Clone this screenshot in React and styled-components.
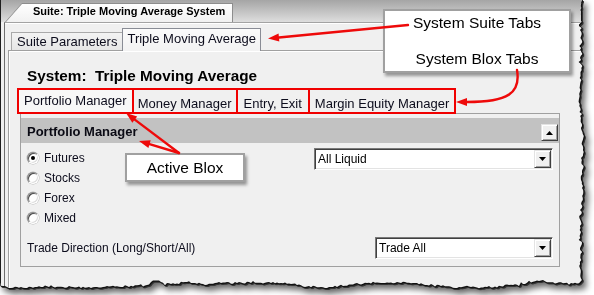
import React from "react";
import styled, { createGlobalStyle } from "styled-components";

const GlobalStyle = createGlobalStyle`
  html, body { margin: 0; padding: 0; background: #ffffff; }
  body { font-family: "Liberation Sans", Arial, sans-serif; color: #000; }
  * { box-sizing: border-box; }
`;

/* ---------- torn edge outline (computed once) ---------- */
function rng(seed) {
  let s = seed;
  return () => {
    s = (s * 16807) % 2147483647;
    return s / 2147483647;
  };
}
const rand = rng(11);
const tornPts = ["0px 0px"];
let walk = 0;
for (let y = 0; y <= 281; y += 2) {
  walk = Math.max(-2.5, Math.min(2.5, walk + (rand() - 0.5) * 1.6));
  const base = y < 24 ? 583 : 581;
  const spike = rand() > 0.8 ? (rand() - 0.5) * 4 : 0;
  const x = base + walk + spike + (rand() - 0.5) * 1.6;
  tornPts.push(`${x.toFixed(1)}px ${y}px`);
}
walk = 0;
for (let x = 579; x >= 0; x -= 2) {
  walk = Math.max(-2.5, Math.min(2.5, walk + (rand() - 0.5) * 1.6));
  const bump = -6 * Math.exp(-(((x - 157) / 7) ** 2));
  const spike = rand() > 0.8 ? (rand() - 0.5) * 3.5 : 0;
  const y = 285 + walk + spike + bump + (rand() - 0.5) * 1.6 - (x > 520 ? 2 : 0);
  tornPts.push(`${x}px ${y.toFixed(1)}px`);
}
tornPts.push("0px 283px");
const TORN = `polygon(${tornPts.join(",")})`;

/* ---------- layout ---------- */
const Stage = styled.div`
  position: relative;
  width: 594px;
  height: 295px;
  overflow: hidden;
  background: #ffffff;
`;

const TornFrame = styled.div`
  width: 594px;
  height: 295px;
  filter: drop-shadow(1px 0 0 #111) drop-shadow(0 1px 0 #111) drop-shadow(1px 1px 0 #333)
    drop-shadow(3px 4px 3px rgba(0, 0, 0, 0.6));
`;

const Window = styled.div`
  width: 590px;
  height: 295px;
  background: #f0f0f0;
  border-left: 1px solid #1e1e1e;
  clip-path: ${TORN};
  display: flex;
  flex-direction: column;
`;

const TitleStrip = styled.div`
  height: 22px;
  flex: none;
  display: flex;
  align-items: flex-end;
  padding-left: 4px;
  background: linear-gradient(#a5a5a5, #dedede);
`;

const SuiteTabShape = styled.div`
  width: 228px;
  height: 19px;
  padding: 1px 1px 0 1px;
  background: #8d8d8d;
  clip-path: polygon(17px 0, 100% 0, 100% 100%, 0 100%);
`;

const SuiteTabFace = styled.div`
  height: 100%;
  background: linear-gradient(#ffffff, #f1f1f1);
  clip-path: polygon(16px 0, 100% 0, 100% 100%, 0 100%);
  padding-left: 27px;
  font-weight: bold;
  font-size: 11px;
  line-height: 15px;
  color: #000;
  white-space: nowrap;
`;

const Frame = styled.div`
  flex: 1;
  margin-left: 3px;
  border-left: 1px solid #6f6f6f;
  border-top: 1px solid #a3a3a3;
  box-shadow: inset 0 1px #ffffff;
  padding: 5px 0 0 3px;
  display: flex;
  flex-direction: column;
`;

const SuiteTabs = styled.div`
  display: flex;
  align-items: flex-end;
  height: 23px;
  margin: 0 0 -1px 3px;
  position: relative;
  z-index: 1;
`;

const SuiteTab = styled.div`
  font-size: 13px;
  line-height: 16px;
  white-space: nowrap;
  color: #0c0c1c;
  border: 1px solid ${(p) => (p.$active ? "#898c95" : "#a9a9a9")};
  border-bottom: none;
  height: ${(p) => (p.$active ? "23px" : "18px")};
  padding: ${(p) => (p.$active ? "2px 4px 0" : "1px 5px 0")};
  margin-bottom: ${(p) => (p.$active ? "0" : "1px")};
  margin-right: ${(p) => (p.$active ? "0" : "-1px")};
  background: ${(p) =>
    p.$active ? "linear-gradient(#fbfbfb, #f2f2f2)" : "linear-gradient(#f3f3f3, #e6e6e6)"};
`;

const SuitePanel = styled.div`
  flex: 1;
  border-top: 1px solid #a0a0a0;
  border-left: 1px solid #a0a0a0;
  box-shadow: inset 1px 1px #ffffff;
  padding-left: 8px;
  display: flex;
  flex-direction: column;
`;

const SystemTitle = styled.div`
  margin: 16px 0 3px 10px;
  font-weight: bold;
  font-size: 15.3px;
  line-height: 18px;
  color: #000;
  white-space: nowrap;
`;

const BloxTabs = styled.div`
  display: flex;
  height: 26px;
  position: relative;
  z-index: 1;
`;

const BloxTab = styled.div`
  height: 26px;
  border: 2px solid #f00000;
  margin-left: ${(p) => (p.$first ? "0" : "-2px")};
  padding: ${(p) => (p.$active ? "3px" : "6px")} ${(p) => p.$pad || "5px"} 0;
  font-size: 13px;
  line-height: 15px;
  white-space: nowrap;
  color: #0c0c1c;
  background: ${(p) => (p.$active ? "#f7f7f7" : "#f0f0f0")};
`;

const BloxPanel = styled.div`
  width: 540px;
  margin: -1px 0 0 3px;
  border: 1px solid #a0a0a0;
  padding-top: 4px;
  display: flex;
  flex-direction: column;
`;

const BloxHeader = styled.div`
  height: 25px;
  background: #c2c2c2;
  display: flex;
  justify-content: space-between;
  padding-left: 6px;
`;

const HeaderTitle = styled.div`
  font-weight: bold;
  font-size: 13px;
  line-height: 23px;
  padding-top: 2px;
  color: #0a0a14;
`;

const ScrollButton = styled.div`
  align-self: flex-end;
  width: 17px;
  height: 17px;
  margin: 0 1px 2px 0;
  background: #f0f0f0;
  border: 1px solid;
  border-color: #e3e3e3 #404040 #404040 #e3e3e3;
  box-shadow: inset 1px 1px #ffffff, inset -1px -1px #a0a0a0;
  display: flex;
  align-items: center;
  justify-content: center;
`;

const BloxBody = styled.div`
  padding: 5px 6px 7px 6px;
  display: flex;
  flex-direction: column;
`;

const TopRow = styled.div`
  display: flex;
  justify-content: space-between;
  align-items: flex-start;
`;

const RadioGroup = styled.div`
  display: flex;
  flex-direction: column;
`;

const RadioRow = styled.label`
  height: 20px;
  display: flex;
  align-items: center;
  gap: 5px;
`;

const RadioCircle = styled.span`
  width: 12px;
  height: 12px;
  border-radius: 50%;
  background: #ffffff;
  border: 1px solid;
  border-color: #8a8a8a #ffffff #ffffff #8a8a8a;
  box-shadow: inset 1px 1px #4a4a4a, inset -1px -1px #dcdcdc, 0 0 0 0.5px #b8b8b8;
  display: flex;
  align-items: center;
  justify-content: center;
  &::after {
    content: "";
    width: 4px;
    height: 4px;
    border-radius: 50%;
    background: ${(p) => (p.$checked ? "#000" : "transparent")};
  }
`;

const RadioLabel = styled.span`
  font-size: 12px;
  line-height: 20px;
  color: #0c0c1c;
`;

const FieldRow = styled.div`
  margin-top: 9px;
  display: flex;
  justify-content: space-between;
  align-items: center;
`;

const FieldLabel = styled.span`
  font-size: 12px;
  color: #0c0c1c;
  white-space: nowrap;
`;

const Select = styled.div`
  width: ${(p) => p.$width}px;
  height: 22px;
  background: #ffffff;
  border: 1px solid;
  border-color: #7a7a7a #ffffff #ffffff #7a7a7a;
  box-shadow: inset 1px 1px #404040, inset -1px -1px #e3e3e3;
  padding: 1px;
  display: flex;
`;

const SelectValue = styled.span`
  flex: 1;
  padding-left: 2px;
  font-size: 12px;
  line-height: 18px;
  color: #000;
`;

const DropButton = styled.span`
  width: 17px;
  height: 18px;
  background: #f0f0f0;
  border: 1px solid;
  border-color: #e3e3e3 #404040 #404040 #e3e3e3;
  box-shadow: inset 1px 1px #ffffff, inset -1px -1px #a0a0a0;
  display: flex;
  align-items: center;
  justify-content: center;
`;

/* ---------- annotations ---------- */
const Callout = styled.div`
  position: absolute;
  left: ${(p) => p.$x}px;
  top: ${(p) => p.$y}px;
  width: ${(p) => p.$w}px;
  height: ${(p) => p.$h}px;
  background: #ffffff;
  border: 2px solid #a0a0a0;
  box-shadow: 2px 3px 3px rgba(0, 0, 0, 0.38);
  display: flex;
  flex-direction: column;
  align-items: center;
  font-size: 15.5px;
  color: #000;
`;

const SuiteCalloutBody = styled.div`
  padding-top: 3px;
  display: flex;
  flex-direction: column;
  align-items: center;
  gap: 18px;
  line-height: 18px;
  white-space: nowrap;
`;

const ActiveCalloutText = styled.div`
  line-height: 25px;
  white-space: nowrap;
`;

const Overlay = styled.svg`
  position: absolute;
  left: 0;
  top: 0;
  pointer-events: none;
`;

const head = (tx, ty, fx, fy, len = 11, hw = 4) => {
  const dx = tx - fx;
  const dy = ty - fy;
  const d = Math.hypot(dx, dy);
  const ux = dx / d;
  const uy = dy / d;
  const bx = tx - ux * len;
  const by = ty - uy * len;
  const px = -uy * hw;
  const py = ux * hw;
  return {
    bx,
    by,
    pts: `${tx},${ty} ${bx + px},${by + py} ${bx - px},${by - py}`,
  };
};

const RED = "#ee0a0a";

function StraightArrow({ fx, fy, tx, ty }) {
  const h = head(tx, ty, fx, fy);
  return (
    <g>
      <line x1={fx} y1={fy} x2={h.bx} y2={h.by} stroke={RED} strokeWidth="2.4" strokeLinecap="round" />
      <polygon points={h.pts} fill={RED} />
    </g>
  );
}

function Arrows() {
  const curveHead = head(456, 102, 468, 102);
  return (
    <Overlay width="594" height="295" viewBox="0 0 594 295">
      <StraightArrow fx={408} fy={25} tx={268} ty={38.5} />
      <path d={`M 517 70 C 521 93, 508 102, ${curveHead.bx} 102`} fill="none" stroke={RED} strokeWidth="2.4" strokeLinecap="round" />
      <polygon points={curveHead.pts} fill={RED} />
      <StraightArrow fx={179} fy={153} tx={126} ty={113} />
      <StraightArrow fx={179} fy={153} tx={139} ty={141} />
    </Overlay>
  );
}

const Triangle = ({ up }) => (
  <svg width="7" height="4" viewBox="0 0 7 4">
    <polygon points={up ? "3.5,0 7,4 0,4" : "0,0 7,0 3.5,4"} fill="#000" />
  </svg>
);

function Radio({ label, checked }) {
  return (
    <RadioRow>
      <RadioCircle $checked={checked} />
      <RadioLabel>{label}</RadioLabel>
    </RadioRow>
  );
}

export default function App() {
  return (
    <>
      <GlobalStyle />
      <Stage>
        <TornFrame>
          <Window>
            <TitleStrip>
              <SuiteTabShape>
                <SuiteTabFace>Suite: Triple Moving Average System</SuiteTabFace>
              </SuiteTabShape>
            </TitleStrip>
            <Frame>
              <SuiteTabs>
                <SuiteTab>Suite Parameters</SuiteTab>
                <SuiteTab $active>Triple Moving Average</SuiteTab>
              </SuiteTabs>
              <SuitePanel>
                <SystemTitle>System:&nbsp; Triple Moving Average</SystemTitle>
                <BloxTabs>
                  <BloxTab $first $active>Portfolio Manager</BloxTab>
                  <BloxTab $pad="4px">Money Manager</BloxTab>
                  <BloxTab $pad="6px">Entry, Exit</BloxTab>
                  <BloxTab>Margin Equity Manager</BloxTab>
                </BloxTabs>
                <BloxPanel>
                  <BloxHeader>
                    <HeaderTitle>Portfolio Manager</HeaderTitle>
                    <ScrollButton>
                      <Triangle up />
                    </ScrollButton>
                  </BloxHeader>
                  <BloxBody>
                    <TopRow>
                      <RadioGroup>
                        <Radio label="Futures" checked />
                        <Radio label="Stocks" />
                        <Radio label="Forex" />
                        <Radio label="Mixed" />
                      </RadioGroup>
                      <Select $width={239}>
                        <SelectValue>All Liquid</SelectValue>
                        <DropButton>
                          <Triangle />
                        </DropButton>
                      </Select>
                    </TopRow>
                    <FieldRow>
                      <FieldLabel>Trade Direction (Long/Short/All)</FieldLabel>
                      <Select $width={178}>
                        <SelectValue>Trade All</SelectValue>
                        <DropButton>
                          <Triangle />
                        </DropButton>
                      </Select>
                    </FieldRow>
                  </BloxBody>
                </BloxPanel>
              </SuitePanel>
            </Frame>
          </Window>
        </TornFrame>
        <Callout $x={383} $y={9} $w={188} $h={64}>
          <SuiteCalloutBody>
            <span>System Suite Tabs</span>
            <span>System Blox Tabs</span>
          </SuiteCalloutBody>
        </Callout>
        <Callout $x={125} $y={153} $w={120} $h={29}>
          <ActiveCalloutText>Active Blox</ActiveCalloutText>
        </Callout>
        <Arrows />
      </Stage>
    </>
  );
}
